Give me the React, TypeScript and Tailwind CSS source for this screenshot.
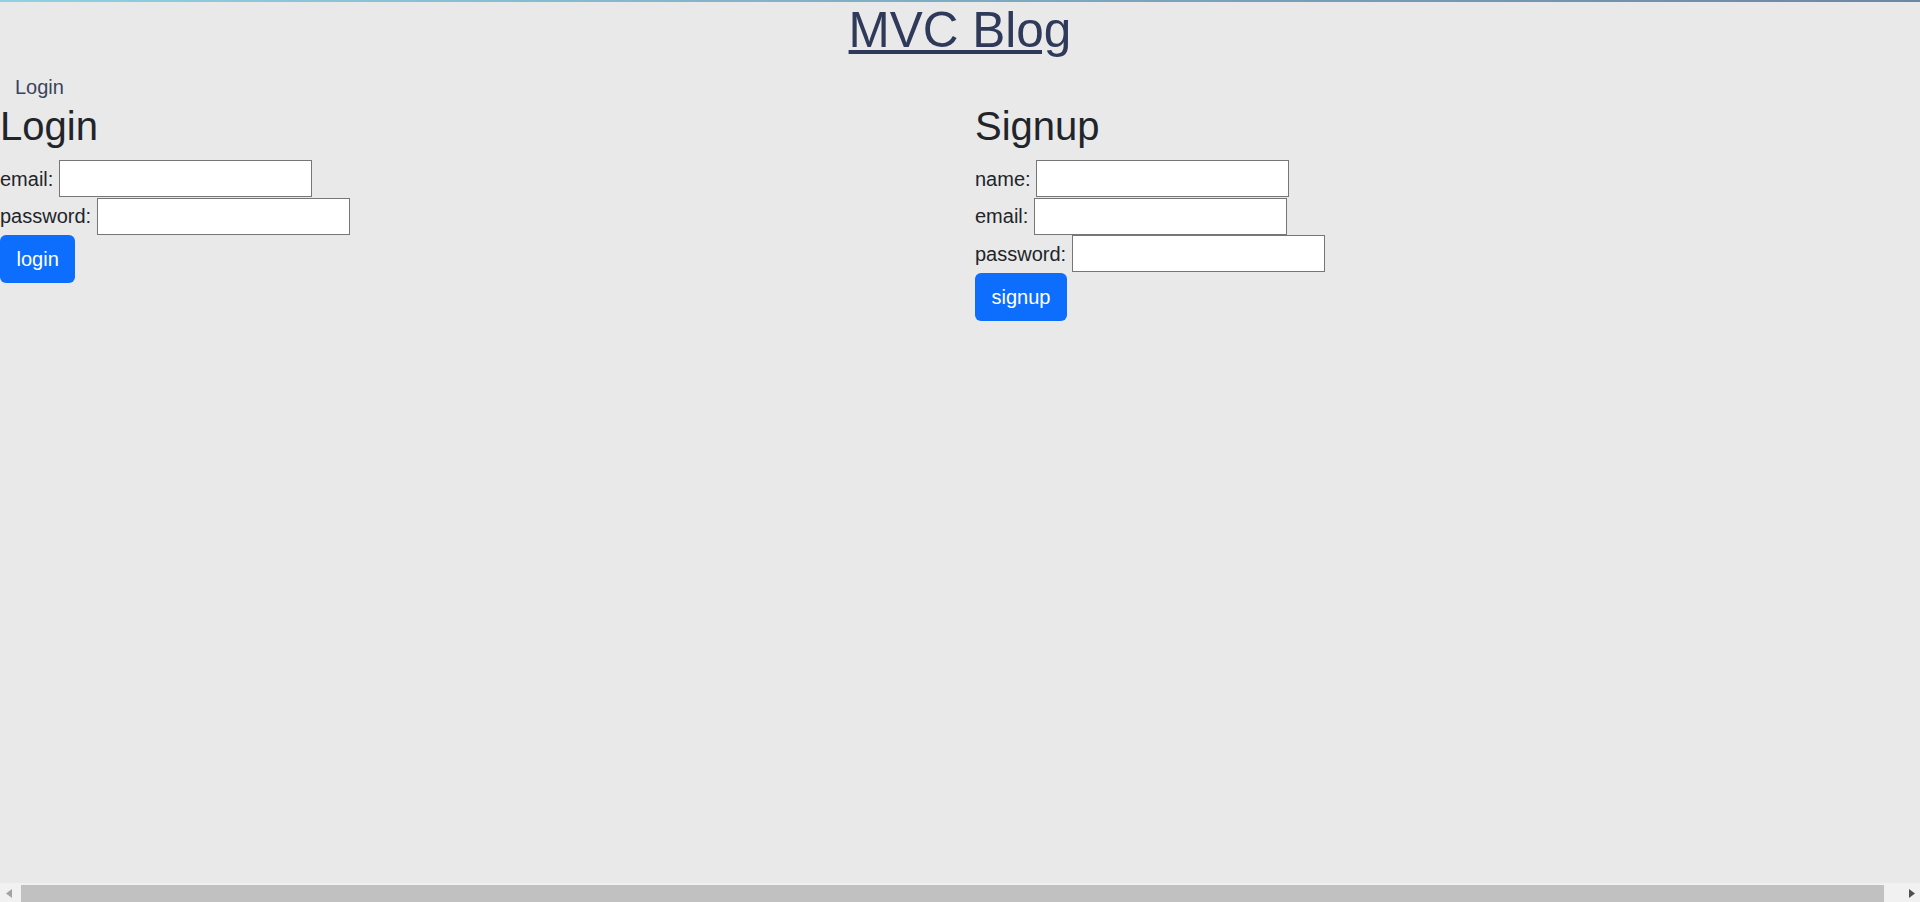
import React from "react";

function Field({ label }: { label: string }) {
  return (
    <div className="flex items-center h-[37.5px]">
      <label className="whitespace-pre">{label + ": "}</label>
      <input type="text" className="w-[253px] h-[37px] bg-white border border-[#767676] outline-none" />
    </div>
  );
}

function SubmitButton({ text }: { text: string }) {
  return (
    <button className="h-[48px] px-[16.5px] rounded-[6px] bg-[#0d6efd] text-white text-[20px] leading-[30px]">
      {text}
    </button>
  );
}

export default function App() {
  return (
    <div className="flex flex-col h-[902px] w-full overflow-hidden bg-[#e9e9e9] font-['Liberation_Sans',Arial,sans-serif] text-[#212529] text-[20px]">
      {/* thin top bar */}
      <div className="h-[2px] w-full bg-gradient-to-r from-[#8fd1e2] to-[#6c87a4]" />

      <main className="flex-1">
        <h1 className="text-center text-[49.5px] leading-[56px]">
          <a href="#" className="underline text-[#2f3a5a]">MVC Blog</a>
        </h1>

        <nav className="mt-[14px] pl-[15px] leading-[30px] text-[#38445f]">
          <a href="#">Login</a>
        </nav>

        <div className="grid grid-cols-[975px_1fr]">
          {/* Login form */}
          <div>
            <h2 className="text-[40px] leading-[48px] mb-[10px]">Login</h2>
            <form>
              <Field label="email" />
              <Field label="password" />
              <SubmitButton text="login" />
            </form>
          </div>

          {/* Signup form */}
          <div>
            <h2 className="text-[40px] leading-[48px] mb-[10px]">Signup</h2>
            <form>
              <Field label="name" />
              <Field label="email" />
              <Field label="password" />
              <SubmitButton text="signup" />
            </form>
          </div>
        </div>
      </main>

      {/* horizontal scrollbar */}
      <div className="h-[19px] bg-[#f1f1f1] flex items-end">
        <div className="w-[17px] h-[17px] flex items-center justify-center">
          <svg width="6" height="9" viewBox="0 0 6 9"><path d="M6 0 L0 4.5 L6 9 Z" fill="#a3a3a3" /></svg>
        </div>
        <div className="w-[4px]" />
        <div className="w-[1863px] h-[17px] bg-[#c1c1c1]" />
        <div className="flex-1" />
        <div className="w-[17px] h-[17px] flex items-center justify-center">
          <svg width="6" height="9" viewBox="0 0 6 9"><path d="M0 0 L6 4.5 L0 9 Z" fill="#505050" /></svg>
        </div>
      </div>
    </div>
  );
}
